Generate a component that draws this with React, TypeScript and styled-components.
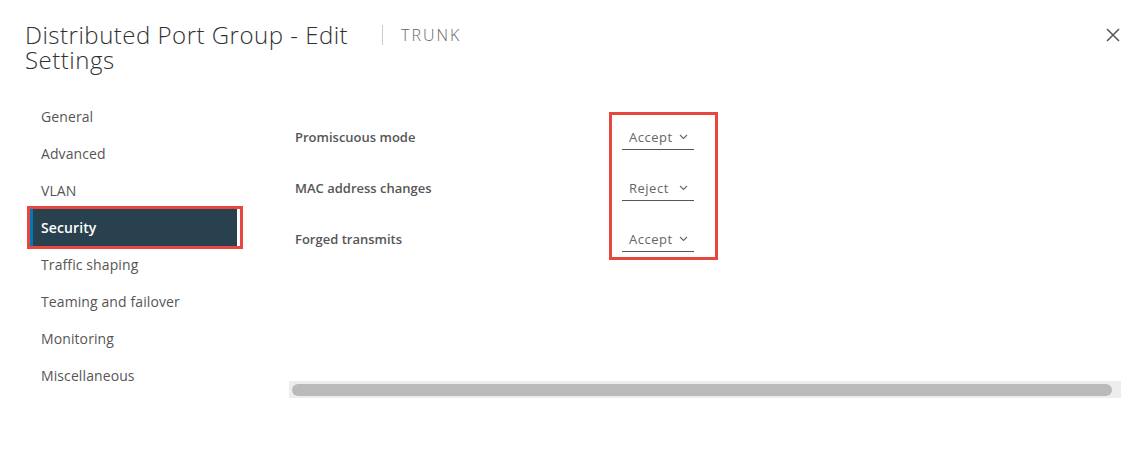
import React from 'react';
import styled, { createGlobalStyle } from 'styled-components';

const GlobalStyle = createGlobalStyle`
  html, body {
    margin: 0;
    padding: 0;
    background: #ffffff;
  }
  body {
    font-family: "Open Sans", Lato, "Liberation Sans", sans-serif;
    color: #565656;
  }
`;

const navItems = [
  'General',
  'Advanced',
  'VLAN',
  'Security',
  'Traffic shaping',
  'Teaming and failover',
  'Monitoring',
  'Miscellaneous',
];

const policies = [
  { label: 'Promiscuous mode', value: 'Accept' },
  { label: 'MAC address changes', value: 'Reject' },
  { label: 'Forged transmits', value: 'Accept' },
];

const Dialog = styled.div`
  width: 1141px;
  height: 473px;
  box-sizing: border-box;
  padding: 22px 20px 0 25px;
`;

const Header = styled.div`
  display: flex;
  align-items: flex-start;
`;

const Title = styled.h1`
  margin: 0;
  width: 340px;
  font-size: 24px;
  line-height: 25px;
  font-weight: 300;
  letter-spacing: 0.5px;
  color: #313131;
`;

const Subtitle = styled.div`
  margin-top: 3px;
  margin-left: 17px;
  padding-left: 18px;
  border-left: 1px solid #cccccc;
  height: 20px;
  font-size: 16px;
  line-height: 20px;
  font-weight: 300;
  color: #666666;
  letter-spacing: 2px;
`;

const CloseButton = styled.button`
  margin-left: auto;
  margin-top: 5px;
  width: 16px;
  height: 16px;
  padding: 0;
  border: none;
  background: none;
  display: flex;
  align-items: center;
  justify-content: center;
`;

const Body = styled.div`
  display: flex;
  margin-top: 26px;
  padding-left: 5px;
`;

const Nav = styled.nav`
  width: 210px;
  display: flex;
  flex-direction: column;
`;

const NavItem = styled.div<{ $active?: boolean }>`
  height: 37px;
  box-sizing: border-box;
  display: flex;
  align-items: center;
  padding-left: 8px;
  border-left: 3px solid ${p => (p.$active ? '#0079b8' : 'transparent')};
  background: ${p => (p.$active ? '#29414e' : 'transparent')};
  color: ${p => (p.$active ? '#ffffff' : '#565656')};
  font-size: 14px;
  letter-spacing: 0.1px;
  font-weight: ${p => (p.$active ? 600 : 400)};
`;

// red marker around the selected nav entry, with a thin white gap on its right
const NavMark = styled.div`
  margin: -3px;
  border: 3px solid #e8473f;
  padding-right: 3px;
  background: #ffffff;
`;

const Content = styled.div`
  margin-left: 49px;
  flex: 1;
  display: flex;
  flex-direction: column;
`;

const ScrollArea = styled.div`
  height: 283px;
  box-sizing: border-box;
  padding: 14px 0 0 6px;
`;

const Form = styled.div`
  display: flex;
  align-items: flex-start;
`;

const Column = styled.div`
  display: flex;
  flex-direction: column;
  gap: 27px;
`;

const LabelColumn = styled(Column)`
  width: 314px;
  padding-top: 14px;
`;

const SelectColumn = styled(Column)`
  width: 93px;
  height: 131px;
  padding: 11px 0 0 10px;
  border: 3px solid #e8473f;
`;

const Label = styled.div`
  height: 24px;
  line-height: 22px;
  font-size: 13px;
  font-weight: 600;
  color: #565656;
`;

const Select = styled.div`
  width: 72px;
  height: 24px;
  box-sizing: border-box;
  display: flex;
  align-items: center;
  justify-content: space-between;
  padding: 0 6px 1px 7px;
  border-bottom: 1px solid #565656;
  font-size: 13px;
  letter-spacing: 0.5px;
  color: #666666;
`;

const ScrollTrack = styled.div`
  height: 17px;
  box-sizing: border-box;
  padding: 3px 9px 2px 3px;
  background: #ededed;
`;

const ScrollThumb = styled.div`
  height: 12px;
  border-radius: 6px;
  background: #bababa;
`;

const Chevron = () => (
  <svg width="9" height="6" viewBox="0 0 9 6">
    <path d="M1 1l3.5 3.5L8 1" fill="none" stroke="#666" strokeWidth="1.1" />
  </svg>
);

const CloseIcon = () => (
  <svg width="14" height="14" viewBox="0 0 14 14">
    <path d="M1 1l12 12M13 1L1 13" stroke="#555" strokeWidth="1.5" fill="none" />
  </svg>
);

const App = () => {
  return (
    <Dialog>
      <GlobalStyle />
      <Header>
        <Title>Distributed Port Group - Edit Settings</Title>
        <Subtitle>TRUNK</Subtitle>
        <CloseButton aria-label="Close">
          <CloseIcon />
        </CloseButton>
      </Header>
      <Body>
        <Nav>
          {navItems.map(item =>
            item === 'Security' ? (
              <NavMark key={item}>
                <NavItem $active>{item}</NavItem>
              </NavMark>
            ) : (
              <NavItem key={item}>{item}</NavItem>
            )
          )}
        </Nav>
        <Content>
          <ScrollArea>
            <Form>
              <LabelColumn>
                {policies.map(p => (
                  <Label key={p.label}>{p.label}</Label>
                ))}
              </LabelColumn>
              <SelectColumn>
                {policies.map(p => (
                  <Select key={p.label}>
                    <span>{p.value}</span>
                    <Chevron />
                  </Select>
                ))}
              </SelectColumn>
            </Form>
          </ScrollArea>
          <ScrollTrack>
            <ScrollThumb />
          </ScrollTrack>
        </Content>
      </Body>
    </Dialog>
  );
};

export default App;
